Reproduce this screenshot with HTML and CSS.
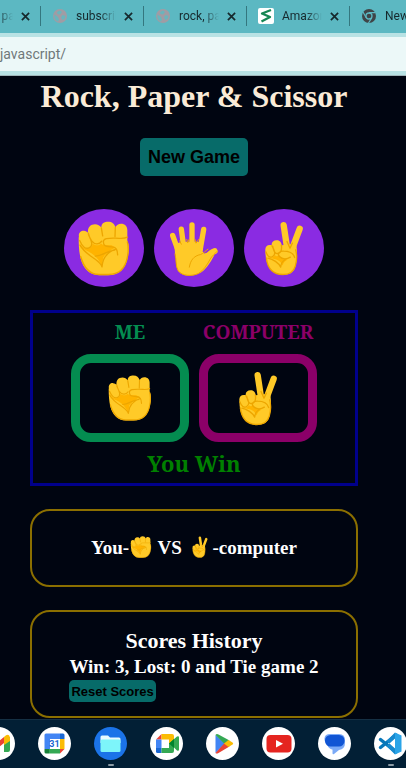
FILE: index.html
```html
<!DOCTYPE html>
<html lang="en">
<head>
<meta charset="utf-8">
<meta name="viewport" content="width=device-width, initial-scale=1">
<title>Rock, Paper &amp; Scissor</title>
<link rel="stylesheet" href="styles.css">
</head>
<body>
<svg class="defs" aria-hidden="true">
  <symbol id="fist" viewBox="70 64 156 164">
    <path fill="#ffca28" d="M73 112C70 99 79 92 88 93c5 0 9 3 12 6-2-16 7-26 21-26 8 0 15 4 19 10 0-12 9-17 20-17 12 0 20 6 22 17 4-7 9-11 17-11 12 0 19 8 19 19v32c6 12 6 30 2 46-6 36-24 57-60 57h-26c-30 0-49-21-56-50-5-19-6-42-6-64z"/>
    <path fill="#ffb300" d="M76 134c8 11 19 16 28 11 8-3 10-8 9-14 9 7 20 7 27 0 6 8 16 5 30 5l14 7c-15 6-30 17-38 29l-5 27c-7-20-22-35-40-44-12-6-22-10-25-21z"/>
    <g fill="none" stroke="#eda600" stroke-width="4" stroke-linecap="round" stroke-linejoin="round">
      <path d="M75 122c7 17 17 27 28 22 13-5 9-18-2-40M101 100c4 18 14 33 26 32 7 0 11-3 14-8M140 84l4 24M182 82l-1 28M76 136c14 26 42 37 54 49 8 8 11 10 12 16 2-28 18-45 42-53M122 169c22-1 32-15 58-18M218 112c-10 6-20 3-37 3-19 0-35-1-35 11 0 13 8 15 25 15 15 0 17 10 18 24M78 170c10 34 29 54 55 54h28c32 0 51-18 57-52 4-20 3-35 0-46"/>
    </g>
  </symbol>
  <symbol id="palm" viewBox="345 63 150 164">
    <g fill="none" stroke="#ffca28" stroke-width="16" stroke-linecap="round">
      <path d="M356 106l18 50M382 87l8 60M414 74v66M449 88l-10 58"/>
      <path d="M482 153c-18 6-25 23-38 32" stroke-width="18"/>
    </g>
    <path fill="#ffca28" d="M361 132q18-7 34-7h50q4 14 1 29 4 9 10 4l25 7c-14 25-25 45-48 56-20 9-48 8-60-8-9-14-5-32-10-54z"/>
    <g fill="none" stroke="#eda600" stroke-width="3" stroke-linecap="round" stroke-linejoin="round">
      <path d="M377 122l5 10M398 118l3 10 4-10M423 118l3 11 8-11M406 201c3-20 13-34 34-38 8-3 14-11 22-16M490 153c-8 9-16 14-21 23-9 17-20 35-36 44-20 9-48 8-60-8-9-14-5-32-10-51"/>
    </g>
  </symbol>
  <symbol id="peace" viewBox="207 63 120 164">
    <g fill="none" stroke="#ffca28" stroke-width="19" stroke-linecap="round"><path d="M266 75l10 66M314 86l-24 64"/></g>
    <path fill="#ffca28" d="M211 150c-1-12 7-18 19-15-1-10 7-16 16-15 9 0 13 7 14 15l43-4c5 20 3 49-1 66-5 20-17 27-37 27-33 0-54-24-54-74z"/>
    <path fill="#ffb300" d="M218 166c8 8 16 8 22-1 5 5 9 3 13-1 3 10 13 11 25 14-9 5-13 9-15 18-5-11-11-16-21-19-10-2-18-4-24-11z"/>
    <g fill="none" stroke="#eda600" stroke-width="4" stroke-linecap="round" stroke-linejoin="round">
      <path d="M213 155c4 14 12 19 20 14 11-6 5-20-2-32M233 138c3 15 7 24 15 22 11-2 13-13 11-25M286 171c-10 7-24 7-32-1-9-9 0-18 12-17 17 0 29 6 33 19M219 174c15 3 32 14 38 27 1-11 5-18 14-23M276 124l9 20 7-15M302 149c4 14 3 34-1 48-5 18-17 26-37 26-28 0-46-18-50-50"/>
    </g>
  </symbol>
  <symbol id="globe" viewBox="0 0 16 16">
    <circle cx="8" cy="8" r="7" fill="#a09ca4"/>
    <path fill="#69b5bd" d="M2.500 6.500L6 9l1 2.500-1 2C3.500 12.500 2 10.500 2.500 6.500zM8 2.500l2 1.500-2 2.500L5.500 6 5 4zM10.500 7l3 1-1 3-2 1-1.500-2.500z"/>
  </symbol>
  <symbol id="close" viewBox="0 0 10 10"><path d="M1 1l8 8M9 1L1 9" fill="none" stroke="#16292d" stroke-width="1.900"/></symbol>
</svg>

<header class="browser">
  <nav class="tabs" aria-label="Tabs">
    <div class="tab"><svg class="favicon"><use href="#globe"/></svg><span class="tab-title">rock, pa</span><button class="close" aria-label="Close tab"><svg><use href="#close"/></svg></button></div>
    <div class="tab"><svg class="favicon"><use href="#globe"/></svg><span class="tab-title">subscribe</span><button class="close" aria-label="Close tab"><svg><use href="#close"/></svg></button></div>
    <div class="tab"><svg class="favicon"><use href="#globe"/></svg><span class="tab-title">rock, paper</span><button class="close" aria-label="Close tab"><svg><use href="#close"/></svg></button></div>
    <div class="tab"><svg class="favicon" viewBox="0 0 16 16"><rect width="16" height="16" rx="2" fill="#fff"/><path d="M13 2L4 5.500l8 3.500-8.500 4.500" fill="none" stroke="#168653" stroke-width="2.300" stroke-linejoin="round"/></svg><span class="tab-title">Amazon</span><button class="close" aria-label="Close tab"><svg><use href="#close"/></svg></button></div>
    <div class="tab"><svg class="favicon" viewBox="0 0 16 16"><circle cx="8" cy="8" r="7" fill="#3f4447"/><circle cx="8" cy="8" r="3" fill="#3f4447" stroke="#5cb8c2" stroke-width="1.300"/><path d="M8 4.700h6.500M5.200 9.700L2 4M10.800 9.700L7.500 15" stroke="#5cb8c2" stroke-width="1.200"/></svg><span class="tab-title">New Tab</span></div>
  </nav>
  <div class="toolbar"><input class="address" type="text" aria-label="Address" value="javascript/"></div>
</header>

<main class="game">
  <h1>Rock, Paper &amp; Scissor</h1>
  <button class="new-game">New Game</button>
  <div class="choices">
    <button class="choice" aria-label="Rock"><svg class="wide"><use href="#fist"/></svg></button>
    <button class="choice" aria-label="Paper"><svg class="hand"><use href="#palm"/></svg></button>
    <button class="choice" aria-label="Scissor"><svg class="narrow"><use href="#peace"/></svg></button>
  </div>
  <section class="arena">
    <div class="players">
      <div class="player me"><h2>ME</h2><div class="pick"><svg class="medium" role="img" aria-label="Rock"><use href="#fist"/></svg></div></div>
      <div class="player computer"><h2>COMPUTER</h2><div class="pick"><svg class="narrow" role="img" aria-label="Scissor"><use href="#peace"/></svg></div></div>
    </div>
    <p class="result">You Win</p>
  </section>
  <section class="card versus">
    <p>You-<svg class="inline-fist" role="img" aria-label="Rock"><use href="#fist"/></svg> VS <svg class="inline-peace" role="img" aria-label="Scissor"><use href="#peace"/></svg>-computer</p>
  </section>
  <section class="card scores">
    <div class="scores-body">
      <h2>Scores History</h2>
      <p>Win: 3, Lost: 0 and Tie game 2</p>
      <button class="reset">Reset Scores</button>
    </div>
  </section>
</main>

<footer class="shelf">
  <a class="app" href="#" aria-label="Gmail"><svg viewBox="0 0 33 33"><circle cx="16.500" cy="16.500" r="16.500" fill="#fff"/><path fill="#4285f4" d="M6 11h5v14H8q-2 0-2-2z"/><path fill="#34a853" d="M22 13l6-3v13q0 2-2 2h-4z"/><path fill="#ea4335" d="M6 11q1-4 5-2l6 5 5-4v6l-5 4-11-8z"/><path fill="#fbbc04" d="M22 10q5-5 6 1v3l-6 4z"/></svg></a>
  <a class="app" href="#" aria-label="Calendar"><svg viewBox="0 0 33 33"><circle cx="16.500" cy="16.500" r="16.500" fill="#fff"/><path fill="#4285f4" d="M8 6.500h14V12H12v10H6.500V8q0-1.500 1.500-1.500z"/><path fill="#1967d2" d="M22 6.500h3q1.500 0 1.500 1.500v4H22z"/><path fill="#fbbc04" d="M22 12h4.500v10H22z"/><path fill="#34a853" d="M11 22h11v4.500H11z"/><path fill="#188038" d="M6.500 22H11v4.500H8q-1.500 0-1.500-1.500z"/><path fill="#ea4335" d="M22 22h4.500L22 26.500z"/><text x="16.500" y="20" text-anchor="middle" class="date">31</text></svg></a>
  <a class="app running" href="#" aria-label="Files"><svg viewBox="0 0 33 33"><circle cx="16.500" cy="16.500" r="16.500" fill="#1b73e8"/><path fill="#e8fbff" d="M6.500 10q0-1.500 1.500-1.500h6l2 2h9q1.500 0 1.500 1.500v4h-20z"/><rect x="6.500" y="12.500" width="20" height="12.500" rx="1.500" fill="#7df5fa"/></svg></a>
  <a class="app" href="#" aria-label="Meet"><svg viewBox="0 0 33 33"><circle cx="16.500" cy="16.500" r="16.500" fill="#fff"/><path fill="#ea4335" d="M6 12.500L11.500 7v5.500z"/><path fill="#4285f4" d="M6 12.500h5.500V21H6z"/><path fill="#1967d2" d="M6 21h5.500v5H7.500Q6 26 6 24.500z"/><path fill="#fbbc04" d="M11.500 7H22q2 0 2 2v6l-5 2v-4.500h-7.500z"/><path fill="#34a853" d="M11.500 21H19v-4.500l8-7q2-1 2 1v12q0 2-2 1l-3-3v3.500q0 2-2 2H11.500z"/><path fill="#00832d" d="M19 16.500l5-4.500v9z"/></svg></a>
  <a class="app" href="#" aria-label="Play Store"><svg viewBox="0 0 33 33"><circle cx="16.500" cy="16.500" r="16.500" fill="#fff"/><path fill="#4285f4" d="M9.500 8v18l9.500-9.500z"/><path fill="#34a853" d="M9.500 8q1-1.500 3-.5l11 6-4.500 4z"/><path fill="#ea4335" d="M9.500 26q1 1 3 0l11-6.500-4.500-4z"/><path fill="#fbbc04" d="M22.500 13l4 2.500q1.500 1 0 2L22.500 20 18 16.500z"/></svg></a>
  <a class="app" href="#" aria-label="YouTube"><svg viewBox="0 0 33 33"><circle cx="16.500" cy="16.500" r="16.500" fill="#fff"/><rect x="4.500" y="8" width="25" height="17.500" rx="4" fill="#e52520"/><path fill="#fff" d="M14 13l7 3.700-7 3.800z"/></svg></a>
  <a class="app" href="#" aria-label="Messages"><svg viewBox="0 0 33 33"><circle cx="16.500" cy="16.500" r="16.500" fill="#fff"/><path fill="#7baaf7" d="M12 7h9q6 0 6 6v3q0 6-6 7l-5 4q-1.500 1-1.500-1v-3.500H14q-4-1-5-6-3-2-2.500-5.500Q7 7 12 7z"/><rect x="7" y="8" width="19.500" height="11.500" rx="5.500" fill="#1155d4"/></svg></a>
  <a class="app running" href="#" aria-label="Visual Studio Code"><svg viewBox="0 0 33 33"><circle cx="16.500" cy="16.500" r="16.500" fill="#fff"/><path d="M6.500 12.500L22 25M6.500 20.500L22 8" stroke="#0877b9" stroke-width="3.500" stroke-linecap="round"/><path fill="#2aa4e8" d="M21 5.500l6.500 3v16l-6.500 3z"/><path fill="#1689ce" d="M21 5.500v6l-5.500 5-3-2.500zM21 27.500v-6l-5.500-5-3 2.500z"/></svg></a>
</footer>
</body>
</html>
```
FILE: styles.css
```css
* { box-sizing: border-box; }

body {
  margin: 0;
  min-height: 100vh;
  display: flex;
  flex-direction: column;
  overflow-x: hidden;
  background: #000511;
  color: #fff;
  font-family: "Liberation Serif", serif;
}

h1, h2, p { margin: 0; }
button { border: 0; padding: 0; color: #000; font-family: "Liberation Sans", sans-serif; font-weight: 700; cursor: pointer; }
svg { display: block; flex: none; }
.defs { position: absolute; width: 0; height: 0; }

/* Browser frame */
.browser { overflow: hidden; background: #b8e2e4; border-bottom: 1px solid #9fb5b9; font-family: Roboto, sans-serif; }
.tabs { display: flex; height: 33px; margin-left: -62px; padding: 6px 0 7px; background: #5cb8c2; }
.tab { flex: none; display: flex; align-items: center; width: 103px; padding-left: 11px; border-right: 1px solid #34777f; }
.tab:last-child { border-right: 0; }
.favicon { width: 16px; height: 16px; }
.tab-title {
  width: 40px;
  margin: 0 8px;
  overflow: hidden;
  white-space: nowrap;
  color: #16292d;
  font-size: 12px;
  -webkit-mask-image: linear-gradient(90deg, #000 60%, transparent);
  mask-image: linear-gradient(90deg, #000 60%, transparent);
}
.close { background: none; }
.close svg { width: 9px; height: 9px; }
.toolbar { padding: 4px 0; }
.address { display: block; width: 100%; height: 34px; padding: 0; border: 0; background: #ecf8f8; color: #70787a; font: 14px Roboto, sans-serif; }

/* Game */
.game { flex: 1; display: flex; flex-direction: column; align-items: center; padding: 0 48px 1px 30px; }
h1 { color: #faebd7; font-size: 32px; line-height: 40px; white-space: nowrap; }
.new-game { height: 38px; margin-top: 22px; padding: 0 8px; border-radius: 5px; background: #076b69; font-size: 18px; }
.choices { display: flex; gap: 10px; margin-top: 33px; }
.choice { display: grid; place-items: center; width: 80px; height: 78px; border-radius: 50%; background: #8a2be2; }
.wide { width: 52px; height: 55px; }
.hand { width: 50px; height: 55px; }
.narrow { width: 40px; height: 55px; }
.medium { width: 44px; height: 46px; }

.arena { width: 100%; margin-top: 23px; padding: 7px 0 6px; border: 3px solid #00008b; font-family: "Noto Serif", "DejaVu Serif Condensed", "Liberation Serif", serif; }
.players { display: flex; justify-content: center; gap: 10px; }
.player { width: 118px; text-align: center; }
.player h2 { font-size: 19px; line-height: 24px; }
.pick { display: grid; place-items: center; height: 88px; margin-top: 10px; border: 9px solid; border-radius: 20px; }
.me { color: #048c50; }
.computer { color: #8b0068; }
.result { margin-top: 8px; color: #008000; font-size: 22px; font-weight: 700; line-height: 27px; text-align: center; }

.card { width: 100%; margin-top: 23px; border: 2px solid #8b6f00; border-radius: 20px; font-size: 19px; font-weight: 700; line-height: 24px; }
.versus { padding: 25px 0; text-align: center; }
.versus svg { display: inline-block; vertical-align: -4px; }
.inline-fist { width: 22px; height: 22px; margin: 0 1px; }
.inline-peace { width: 16px; height: 22px; margin: 0 5px; }
.scores { display: flex; justify-content: center; padding: 15px 0 14px; }
.scores-body { display: flex; flex-direction: column; align-items: flex-start; }
.scores h2 { align-self: center; font-size: 22px; line-height: 28px; }
.reset { height: 22px; margin-top: 1px; padding: 0 2px; border-radius: 5px; background: #076b69; font-size: 13px; }

/* App shelf */
.shelf { display: flex; gap: 23px; height: 49px; padding: 7px 0 0; overflow: hidden; border-top: 1px solid #153044; background: #021f35; }
.app { position: relative; flex: none; width: 33px; height: 41px; }
.app:first-child { margin-left: -18px; }
.app svg { width: 33px; height: 33px; }
.running::after { content: ""; position: absolute; bottom: 2px; left: 14px; width: 6px; height: 2px; border-radius: 1px; background: #8c9ba5; }
.date { fill: #1967d2; font: 700 9px Roboto, sans-serif; }
```
